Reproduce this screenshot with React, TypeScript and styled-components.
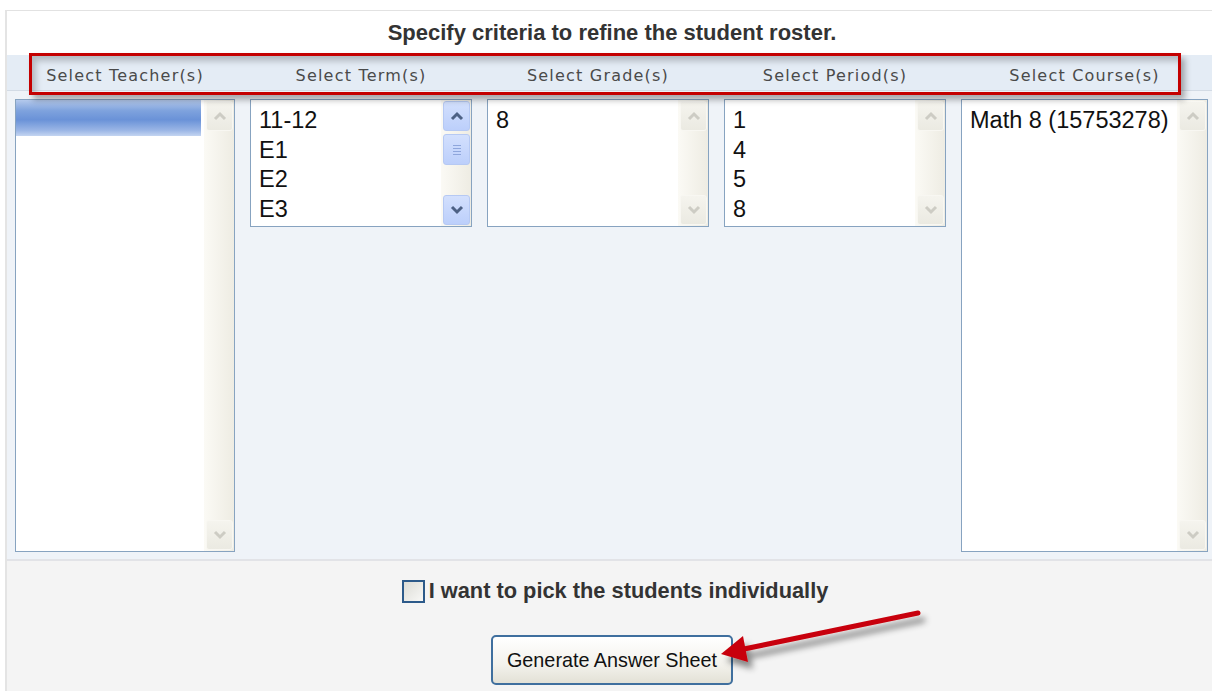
import React from 'react';
import styled, { createGlobalStyle } from 'styled-components';

const GlobalStyle = createGlobalStyle`
  html, body {
    margin: 0;
    padding: 0;
    background: #ffffff;
    font-family: "Liberation Sans", Arial, sans-serif;
    overflow: hidden;
  }
`;

const Page = styled.div`
  position: relative;
  width: 1212px;
  height: 692px;
  padding: 10px 0 0 5px;
  box-sizing: border-box;
  overflow: hidden;
`;

const Panel = styled.div`
  width: 1212px;
  border-top: 1px solid #e2e2e2;
  border-left: 2px solid #e4e4e4;
  box-sizing: border-box;
`;

const Title = styled.div`
  height: 44px;
  display: flex;
  align-items: center;
  justify-content: center;
  font-size: 22px;
  font-weight: bold;
  color: #333333;
  background: #ffffff;
`;

const columns = '220px 222px 222px 222px 247px';

const HeaderBand = styled.div`
  display: grid;
  grid-template-columns: ${columns};
  column-gap: 15px;
  height: 36px;
  padding: 5px 0 0 8px;
  box-sizing: border-box;
  align-items: center;
  background: #e4ecf5;
  border-bottom: 1px solid #d3dbe5;
`;

const HeaderLabel = styled.div`
  text-align: center;
  font-family: "DejaVu Sans", Verdana, sans-serif;
  font-size: 16px;
  letter-spacing: 1.2px;
  color: #4a4a4a;
`;

const ListArea = styled.div`
  display: grid;
  grid-template-columns: ${columns};
  column-gap: 15px;
  align-items: start;
  padding: 8px 0 7px 8px;
  background: #eff3f8;
  border-bottom: 2px solid #e2e3e7;
`;

const Box = styled.div<{ $height: number }>`
  display: flex;
  height: ${(p) => p.$height}px;
  border: 1px solid #87a3c0;
  background: #ffffff;
  box-sizing: border-box;
`;

const Items = styled.div`
  flex: 1;
  padding-top: 6px;
  overflow: hidden;
`;

const Item = styled.div`
  height: 29.5px;
  line-height: 29.5px;
  padding-left: 8px;
  font-size: 23.5px;
  color: #111111;
  white-space: nowrap;
`;

const BlankSelected = styled.div`
  height: 36px;
  margin-top: -6px;
  margin-right: 3px;
  background: linear-gradient(
    to bottom,
    #b4c9ec 0%,
    #7ea2dd 30%,
    #6a92d8 55%,
    #9cb7e6 85%,
    #c4d5f1 100%
  );
`;

const ScrollTrack = styled.div`
  width: 30px;
  display: flex;
  flex-direction: column;
  padding: 1px 1px 1px 2px;
  box-sizing: border-box;
  background: linear-gradient(to right, #fbfaf5, #eeece3);
`;

const ScrollButton = styled.div<{ $active?: boolean }>`
  height: 30px;
  display: flex;
  align-items: center;
  justify-content: center;
  border-radius: 3px;
  border: 1px solid ${(p) => (p.$active ? '#b6c9f3' : '#f8f7f2')};
  background: ${(p) =>
    p.$active
      ? 'linear-gradient(to bottom, #d3e0fd, #bccffb)'
      : 'linear-gradient(to bottom, #f5f4ee, #ebeae2)'};
  box-sizing: border-box;
`;

const Thumb = styled(ScrollButton)`
  margin-top: 3px;
  height: 31px;
`;

const Spacer = styled.div`
  flex: 1;
`;

const Footer = styled.div`
  height: 130px;
  background: #f4f4f4;
  display: flex;
  flex-direction: column;
  align-items: center;
  padding-top: 18px;
  box-sizing: border-box;
`;

const CheckRow = styled.label`
  display: flex;
  align-items: center;
  gap: 4px;
  height: 24px;
  padding-left: 6px;
  font-size: 21.8px;
  font-weight: bold;
  color: #333333;
`;

const CheckBox = styled.span`
  width: 23px;
  height: 23px;
  border: 2px solid #2c5a8a;
  background: linear-gradient(135deg, #dcdcd6, #f8f8f6);
  box-sizing: border-box;
`;

const Button = styled.button`
  margin-top: 32px;
  width: 242px;
  height: 50px;
  border: 2px solid #3f6f9e;
  border-radius: 5px;
  background: linear-gradient(to bottom, #ffffff, #f3f2ec 60%, #e3e1d6);
  font-family: "Liberation Sans", Arial, sans-serif;
  font-size: 19.8px;
  color: #111111;
  padding: 0;
`;

const Callout = styled.div`
  position: absolute;
  left: 29px;
  top: 53px;
  width: 1152px;
  height: 42px;
  border: 3.5px solid #c40000;
  box-sizing: border-box;
  box-shadow: 4px 5px 6px rgba(0, 0, 0, 0.3), inset 4px 5px 6px rgba(0, 0, 0, 0.22);
  pointer-events: none;
`;

const Pointer = styled.svg`
  position: absolute;
  left: 700px;
  top: 590px;
  width: 240px;
  height: 100px;
  overflow: visible;
  pointer-events: none;
`;

const Chevron: React.FC<{ up?: boolean; active?: boolean }> = ({ up, active }) => (
  <svg width="16" height="12" viewBox="0 0 16 12">
    <polyline
      points={up ? '3,9 8,4 13,9' : '3,3 8,8 13,3'}
      fill="none"
      stroke={active ? '#4d6185' : '#cdccc4'}
      strokeWidth="3"
    />
  </svg>
);

const Grip: React.FC = () => (
  <svg width="12" height="12" viewBox="0 0 12 12">
    {[2, 5, 8, 11].map((y) => (
      <line key={y} x1="2" x2="10" y1={y - 0.5} y2={y - 0.5} stroke="#8ea6dc" strokeWidth="1" />
    ))}
  </svg>
);

interface ListProps {
  height: number;
  items?: string[];
  blankSelected?: boolean;
  scrollable?: boolean;
}

const ListBox: React.FC<ListProps> = ({ height, items = [], blankSelected, scrollable }) => (
  <Box $height={height}>
    <Items>
      {blankSelected && <BlankSelected />}
      {items.map((item) => (
        <Item key={item}>{item}</Item>
      ))}
    </Items>
    <ScrollTrack>
      <ScrollButton $active={scrollable}>
        <Chevron up active={scrollable} />
      </ScrollButton>
      {scrollable && (
        <Thumb $active>
          <Grip />
        </Thumb>
      )}
      <Spacer />
      <ScrollButton $active={scrollable}>
        <Chevron active={scrollable} />
      </ScrollButton>
    </ScrollTrack>
  </Box>
);

const headers = [
  'Select Teacher(s)',
  'Select Term(s)',
  'Select Grade(s)',
  'Select Period(s)',
  'Select Course(s)',
];

const App: React.FC = () => {
  return (
    <Page>
      <GlobalStyle />
      <Panel>
        <Title>Specify criteria to refine the student roster.</Title>
        <HeaderBand>
          {headers.map((h) => (
            <HeaderLabel key={h}>{h}</HeaderLabel>
          ))}
        </HeaderBand>
        <ListArea>
          <ListBox height={453} blankSelected />
          <ListBox height={128} items={['11-12', 'E1', 'E2', 'E3']} scrollable />
          <ListBox height={128} items={['8']} />
          <ListBox height={128} items={['1', '4', '5', '8']} />
          <ListBox height={453} items={['Math 8 (15753278)']} />
        </ListArea>
        <Footer>
          <CheckRow>
            <CheckBox />
            I want to pick the students individually
          </CheckRow>
          <Button>Generate Answer Sheet</Button>
        </Footer>
      </Panel>
      <Callout />
      <Pointer viewBox="0 0 240 100">
        <defs>
          <filter id="arrowShadow" x="-20%" y="-40%" width="140%" height="180%">
            <feDropShadow dx="5" dy="7" stdDeviation="3" floodColor="#000" floodOpacity="0.45" />
          </filter>
        </defs>
        <g filter="url(#arrowShadow)">
          <line x1="218" y1="23" x2="44" y2="59" stroke="#c8000c" strokeWidth="5" strokeLinecap="round" />
          <polygon points="21,64 43,46 48,72" fill="#c8000c" />
        </g>
      </Pointer>
    </Page>
  );
};

export default App;
